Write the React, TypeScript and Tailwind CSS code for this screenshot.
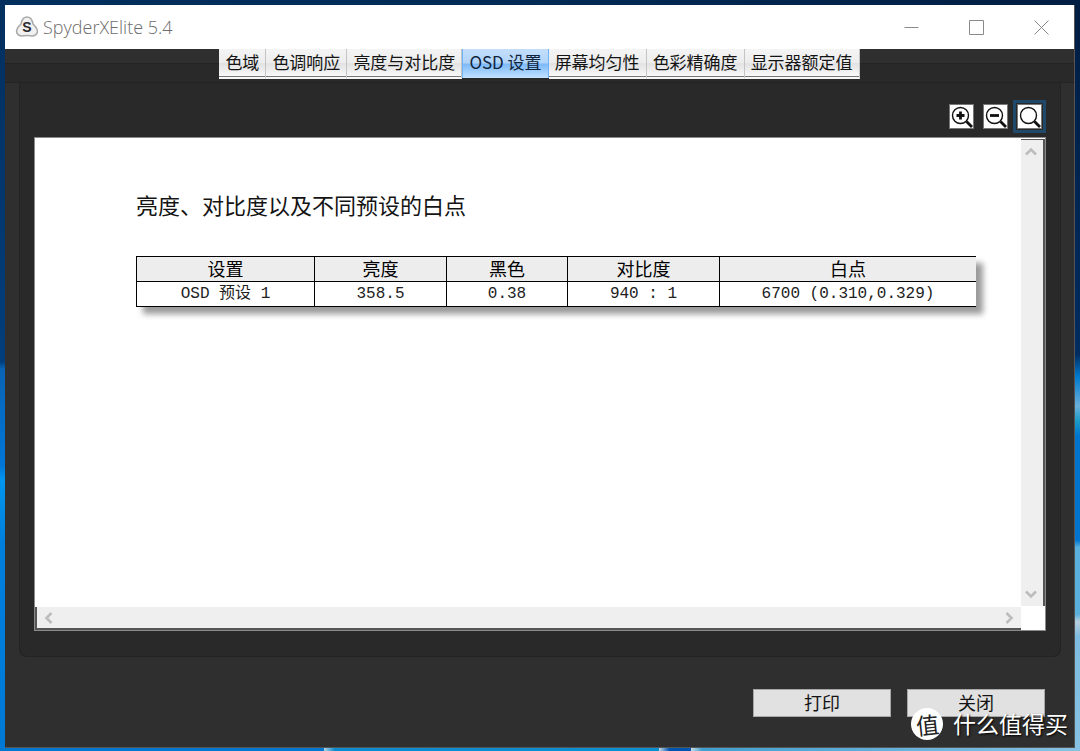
import type { ReactNode } from 'react';

const TABS = ['色域', '色调响应', '亮度与对比度', 'OSD 设置', '屏幕均匀性', '色彩精确度', '显示器额定值'];
const ACTIVE_TAB = 'OSD 设置';

const COLUMNS = [
  { label: '设置', width: 'w-[178px]' },
  { label: '亮度', width: 'w-[132px]' },
  { label: '黑色', width: 'w-[121px]' },
  { label: '对比度', width: 'w-[152px]' },
  { label: '白点', width: '' },
];

const ROWS = [['OSD 预设 1', '358.5', '0.38', '940 : 1', '6700 (0.310,0.329)']];

function SpyderLogo() {
  return (
    <svg viewBox="0 0 24 24" className="size-6" aria-hidden="true">
      <path
        d="M8.3 3.4Q12 .6 15.7 3.4Q17.5 5.5 18 9Q22.8 13.5 22.4 17Q21.6 20.4 17.6 21.1Q12 19.8 6.4 21.1Q2.4 20.4 1.6 17Q1.2 13.5 6 9Q6.5 5.5 8.3 3.4Z"
        fill="#f1f1f1"
        stroke="#a8a8a8"
        strokeWidth="1.5"
      />
      <text
        x="12"
        y="17"
        textAnchor="middle"
        fontSize="14"
        fontWeight="700"
        fontFamily="Liberation Sans, sans-serif"
        fill="#2b2b2b"
      >
        S
      </text>
    </svg>
  );
}

function CaptionButton({ label, children }: { label: string; children: ReactNode }) {
  return (
    <button aria-label={label} className="flex w-[65px] items-center justify-center">
      <svg viewBox="0 0 15 15" className="size-[15px]" fill="none" stroke="#8a8a8a">
        {children}
      </svg>
    </button>
  );
}

function TitleBar() {
  return (
    <header className="flex h-11 shrink-0 items-center justify-between bg-white pl-[10px]">
      <div className="flex items-center gap-1">
        <SpyderLogo />
        <h1 className="font-['Open_Sans',sans-serif] text-[18px] leading-6 font-light text-[#6c6c6c]">SpyderXElite 5.4</h1>
      </div>
      <div className="flex h-full">
        <CaptionButton label="最小化">
          <path d="M.5 7.5h14" />
        </CaptionButton>
        <CaptionButton label="最大化">
          <path d="M.5 .5h14v14h-14z" />
        </CaptionButton>
        <CaptionButton label="关闭窗口">
          <path d="M.5 .5l14 14M14.5 .5l-14 14" />
        </CaptionButton>
      </div>
    </header>
  );
}

function TabStrip() {
  return (
    <div className="flex h-[34px] shrink-0 justify-center bg-[linear-gradient(#2f2f2f_14px,#232323_14px,#232323_15px,#292929_15px,#292929_33px,#232323_33px)]">
      <div role="tablist" className="flex h-[30px]">
        {TABS.map((tab) => (
          <button
            key={tab}
            role="tab"
            aria-selected={tab === ACTIVE_TAB}
            className={
              tab === ACTIVE_TAB
                ? 'h-[29px] border-x border-[#6db3fb] bg-[linear-gradient(#c3defa,#b0d4fa_48%,#7db9f8_52%,#c2e2ff)] px-[6px] pb-1 text-[17px] leading-[24px] text-[#10233c]'
                : 'border-r border-b-2 border-r-[#c4c4c4] border-b-[#f8f8f8] bg-[linear-gradient(#f4f4f4,#ededed_48%,#e2e2e2_52%,#f8f8f8_27px,#777_27px)] px-[6px] pb-[3px] text-[17px] leading-[24px] text-[#141414]'
            }
          >
            {tab}
          </button>
        ))}
      </div>
    </div>
  );
}

function ZoomButton({ label, focused, children }: { label: string; focused?: boolean; children?: ReactNode }) {
  return (
    <span className={focused ? 'border-[3px] border-[#1f486b] p-px' : 'p-1'}>
      <button aria-label={label} className="block size-[25px] border border-[#777] bg-white">
        <svg viewBox="0 0 23 23" className="size-full" fill="none" stroke="#111">
          <circle cx="10.5" cy="10.5" r="8" strokeWidth="1.4" />
          <path d="M16.5 16.5L22 22" strokeWidth="2.8" />
          {children}
        </svg>
      </button>
    </span>
  );
}

function ZoomTools() {
  return (
    <div className="flex justify-end gap-px">
      <ZoomButton label="放大">
        <path d="M6.5 10.5h8M10.5 6.5v8" strokeWidth="2.8" />
      </ZoomButton>
      <ZoomButton label="缩小">
        <path d="M6 10.5h9" strokeWidth="2.8" />
      </ZoomButton>
      <ZoomButton label="适合窗口" focused />
    </div>
  );
}

function ScrollArrow({ label, points }: { label: string; points: string }) {
  return (
    <button aria-label={label} className="flex size-5 items-center justify-center">
      <svg viewBox="0 0 12 12" className="size-3" fill="none" stroke="#bdbdbd" strokeWidth="2.6">
        <polyline points={points} />
      </svg>
    </button>
  );
}

function SettingsTable() {
  return (
    <table className="w-full table-fixed border-collapse border-y border-l border-black bg-white text-center text-black shadow-[7px_7px_6px_#9a9a9a]">
      <thead>
        <tr className="h-[25px] bg-[#ededed] text-[18px] leading-[22px]">
          {COLUMNS.map((column) => (
            <th key={column.label} scope="col" className={`${column.width} border-l border-black p-0 pb-[2px] font-normal`}>
              {column.label}
            </th>
          ))}
        </tr>
      </thead>
      <tbody>
        {ROWS.map((row) => (
          <tr
            key={row[0]}
            className="h-[25px] border-t border-black font-['Liberation_Mono','Noto_Sans_CJK_SC',monospace] text-[16px] leading-[24px] text-[#222]"
          >
            {row.map((cell) => (
              <td key={cell} className="border-l border-black p-0">
                {cell}
              </td>
            ))}
          </tr>
        ))}
      </tbody>
    </table>
  );
}

function ReportView() {
  return (
    <div className="mt-1 grid flex-1 grid-cols-[1fr_24px] grid-rows-[1fr_24px] border border-[#8a8a8a] bg-white">
      <section className="pt-[50px] pr-[45px] pl-[101px]">
        <h2 className="text-[22px] leading-8 text-[#141414]">亮度、对比度以及不同预设的白点</h2>
        <div className="mt-9">
          <SettingsTable />
        </div>
      </section>
      <div className="mt-px flex flex-col justify-between border-t border-r-2 border-[#555] bg-[#efefef] py-[2px]">
        <ScrollArrow label="向上滚动" points="1,8.5 6,3.5 11,8.5" />
        <ScrollArrow label="向下滚动" points="1,3.5 6,8.5 11,3.5" />
      </div>
      <div className="mt-px flex items-center justify-between border-b-2 border-l-2 border-[#555] bg-[#efefef] px-[2px]">
        <ScrollArrow label="向左滚动" points="8.5,1 3.5,6 8.5,11" />
        <ScrollArrow label="向右滚动" points="3.5,1 8.5,6 3.5,11" />
      </div>
    </div>
  );
}

function Footer() {
  return (
    <footer className="flex shrink-0 justify-end gap-4 pt-8 pr-[29px] pb-[30px]">
      {['打印', '关闭'].map((label) => (
        <button
          key={label}
          className="h-7 w-[138px] border border-[#a8a8a8] bg-[#e1e1e1] pb-[2px] text-[18px] leading-[24px] text-[#141414]"
        >
          {label}
        </button>
      ))}
    </footer>
  );
}

function Watermark() {
  return (
    <div className="pointer-events-none absolute right-3 bottom-[11px] flex items-center gap-[10px] text-white">
      <span className="flex size-8 items-center justify-center rounded-full bg-white text-[23px] leading-none text-[#222]">
        <span className="-rotate-6">值</span>
      </span>
      <span className="pb-[2px] text-[23px] leading-[30px] [text-shadow:1px_1px_2px_#000]">什么值得买</span>
    </div>
  );
}

export default function App() {
  return (
    <div className="relative grid min-h-screen grid-cols-[5px_1fr_5px] grid-rows-[5px_1fr_3px] font-['Noto_Sans_CJK_SC',sans-serif]">
      <div className="col-span-3 bg-[linear-gradient(90deg,#022f5e,#012a55_50%,#001d42)]" />
      <div className="bg-[linear-gradient(#022f5e,#023e7c_48%,#0a63b4_49%,#0077d8_62%,#0096ee_64%,#0080dd_72%,#0078d6)]" />
      <main className="flex flex-col border-r border-b border-[#555] bg-[#2f2f2f]">
        <TitleBar />
        <TabStrip />
        <div className="mr-[13px] ml-[14px] flex flex-1 flex-col rounded-b-lg border border-t-0 border-[#222] bg-[#292929] px-[14px] pt-[17px] pb-[25px]">
          <ZoomTools />
          <ReportView />
        </div>
        <Footer />
      </main>
      <div className="bg-[linear-gradient(#001d42,#002c60_47%,#007ad0_50%,#6ab0da_54%,#1a9cc8_56%,#0074cf_58%,#0074cf_72%,#5ab0dc_73%,#5ab0dc_82%,#b8cfdc_83%,#7dbce0_85%,#86c2e4)]" />
      <div className="col-span-3 bg-[linear-gradient(90deg,#0078d0_30%,#b4d4e0_30%,#0a8cd0_31%,#0a90d0_61%,#c8dce4_61%,#0055b0_62%,#0055b0_64%,#c8dce4_64%,#3fa0d0_65%,#86c2e4)]" />
      <Watermark />
    </div>
  );
}
